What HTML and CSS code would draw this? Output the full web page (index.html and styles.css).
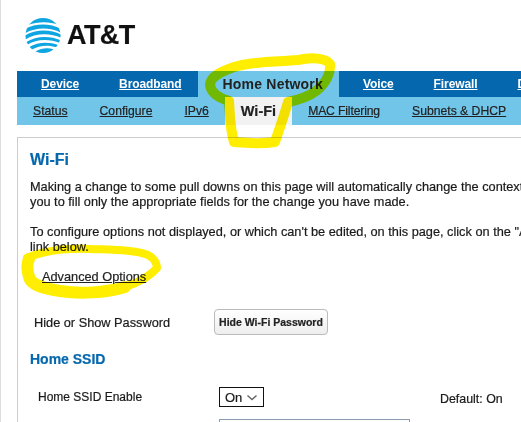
FILE: index.html
```html
<!DOCTYPE html>
<html>
<head>
	<title>Wi-Fi</title>
	<link rel="stylesheet" href="styles.css">
</head>
<body>
	<div class="page">
		<header class="logo">
			<svg class="globe" width="36" height="37" viewBox="0 0 38 38">
				<defs><clipPath id="globe-clip"><circle cx="19" cy="19" r="18.5"/></clipPath></defs>
				<g clip-path="url(#globe-clip)">
					<rect width="38" height="38" fill="#fff"/>
					<path d="M4 0 L34 0 L36 8 C26 4 14 4 3 8Z" fill="#0ea5e0"/>
					<path d="M0 12 C12 6 26 6 38 12 L38 16 C26 10 12 10 0 16.5Z" fill="#0ea5e0"/>
					<path d="M0 19 C11 12 27 12 38 18 L38 21.5 C27 16 11 16 0 23.5Z" fill="#0ea5e0"/>
					<path d="M1 26 C12 19 26 19 38 24 L37 27 C26 22.5 12 22.5 2 29Z" fill="#0ea5e0"/>
					<path d="M4 31.5 C14 25.5 25 25.5 35 29 L33.5 31.5 C24 28.5 15 29.5 7 34Z" fill="#0ea5e0"/>
					<path d="M11 36 C18 31.5 25 32 30 33.5 L26 38 L14 38Z" fill="#0ea5e0"/>
				</g>
			</svg>
			<span class="brand">AT&amp;T</span>
		</header>

		<nav class="main-nav">
			<a href="#">Device</a>
			<a href="#">Broadband</a>
			<a href="#" class="active">Home Network</a>
			<a href="#">Voice</a>
			<a href="#">Firewall</a>
			<a href="#">Diagnostics</a>
		</nav>
		<nav class="sub-nav">
			<a href="#">Status</a>
			<a href="#">Configure</a>
			<a href="#">IPv6</a>
			<a href="#" class="active">Wi-Fi</a>
			<a href="#">MAC Filtering</a>
			<a href="#">Subnets &amp; DHCP</a>
		</nav>

		<main class="panel">
			<h1 class="title">Wi-Fi</h1>
			<p class="intro">Making a change to some pull downs on this page will automatically change the context of the page, allowing<br>you to fill only the appropriate fields for the change you have made.</p>
			<p class="intro">To configure options not displayed, or which can't be edited, on this page, click on the "Advanced Options"<br>link below.</p>
			<a href="#" class="advanced">Advanced Options</a>
			<div class="row row-password">
				<span class="label">Hide or Show Password</span>
				<button class="btn">Hide Wi-Fi Password</button>
			</div>
			<h2 class="section">Home SSID</h2>
			<div class="row row-enable">
				<span class="label">Home SSID Enable</span>
				<span class="select">On
					<svg width="12" height="7" viewBox="0 0 12 7"><path d="M1.5 1.5 L6 5.5 L10.5 1.5" fill="none" stroke="#666" stroke-width="1.4"/></svg>
				</span>
				<span class="default">Default: On</span>
			</div>
			<div class="row row-name">
				<span class="field"></span>
			</div>
		</main>
	</div>

	<!-- marker scribbles on top of the screenshot -->
	<svg class="scribble" width="521" height="422" viewBox="0 0 521 422">
		<g fill="none" stroke="#ffee00" stroke-linejoin="round" stroke-linecap="round">
			<path stroke-width="10" d="M298 60 C312 57 326 58 330 64 C331 73 326 83 316 91 C308 97 298 100 288 102 C284 116 279 130 275 142 C262 144 245 143 234 142 C230 130 230 114 229 101 C219 98 211 93 210 85 C210 77 220 72 234 67 C254 61 276 62 298 60Z"/>
			<path stroke-width="8" d="M27 258 C45 250 65 248 90 249 C115 250 135 250 148 255 C155 259 157 263 157 268 C150 276 140 282 125 287"/>
			<path stroke-width="12" d="M125 287 C105 293 80 294 60 291 C42 288 31 285 29 277 C27 270 27 263 29 259"/>
		</g>
	</svg>
</body>
</html>
```

FILE: styles.css
```css
html, body {
	margin: 0;
	padding: 0;
	height: 100%;
	overflow: hidden;
	background-color: #fff;
}
body {
	border-left: 1px solid #ddd;
	box-sizing: border-box;
	color: #1a1a1a;
	font-family: 'Liberation Sans', Arial, sans-serif;
	font-size: 12.75px;
	-webkit-text-stroke: 0.2px;
}
.page {
	padding-left: 16px;
	width: 700px;
}
.logo {
	display: flex;
	align-items: center;
	height: 71px;
	padding-left: 8px;
	box-sizing: border-box;
	padding-bottom: 1px;
}
.globe {
	margin-right: 6px;
}
.brand {
	color: #111;
	font-size: 27px;
	font-weight: bold;
	letter-spacing: -0.6px;
}
.main-nav, .sub-nav {
	display: flex;
}
.main-nav {
	background-color: #0568ae;
	font-size: 12px;
	height: 26px;
	line-height: 26px;
	-webkit-text-stroke: 0;
}
.main-nav a {
	color: #fff;
	font-weight: bold;
	letter-spacing: -0.1px;
	margin: 0 16px 0 24px;
}
.main-nav a.active {
	background-color: #71c5e8;
	color: #222;
	font-size: 14px;
	letter-spacing: 0.2px;
	margin: 0;
	padding: 0 16px 0 25px;
	text-decoration: none;
}
.sub-nav {
	background-color: #71c5e8;
	font-size: 12.2px;
	height: 28px;
	line-height: 28px;
}
.sub-nav a {
	color: #222;
	margin: 0 16px;
}
.sub-nav a.active {
	background-color: #f2f2f2;
	font-size: 14.5px;
	font-weight: bold;
	margin: 0;
	padding: 0 16px;
	text-decoration: none;
}
.sub-nav a.active + a {
	letter-spacing: -0.15px;
}
.panel {
	border: 1px solid #ccc;
	margin-top: 12px;
	padding: 12px 12px 0;
}
.title {
	color: #0568ae;
	font-size: 16px;
	line-height: 20px;
	margin: 0 0 9px;
}
.intro {
	line-height: 15px;
	margin: 0 0 15px;
	white-space: nowrap;
}
.advanced {
	color: #222;
	display: block;
	line-height: 15px;
	margin: 12px 0 0 12px;
}
.row {
	display: flex;
	align-items: center;
}
.row-password {
	height: 26px;
	margin-top: 25px;
	padding-left: 4px;
}
.row-password .label {
	width: 180px;
}
.btn {
	background: linear-gradient(#fff, #eee);
	border: 1px solid #bbb;
	border-radius: 4px;
	color: #222;
	font-family: inherit;
	font-size: 10.5px;
	font-weight: bold;
	height: 26px;
	padding: 0;
	width: 114px;
}
.section {
	color: #0568ae;
	font-size: 14px;
	line-height: 16px;
	margin: 16px 0 0;
}
.row-enable {
	font-size: 12px;
	height: 20px;
	margin-top: 20px;
	padding-left: 8px;
}
.row-enable .label {
	width: 181px;
}
.select {
	align-items: center;
	border: 1px solid #111;
	box-sizing: border-box;
	display: flex;
	font-size: 13px;
	height: 20px;
	justify-content: space-between;
	padding: 0 5px;
	width: 45px;
}
.default {
	margin: 4px 0 0 176px;
	font-size: 12.4px;
}
.row-name {
	margin-top: 12px;
	padding-left: 189px;
}
.field {
	border: 1px solid #8a9bb0;
	box-sizing: border-box;
	display: block;
	height: 24px;
	width: 191px;
}
.scribble {
	left: 0;
	mix-blend-mode: multiply;
	position: absolute;
	top: 0;
}
```
